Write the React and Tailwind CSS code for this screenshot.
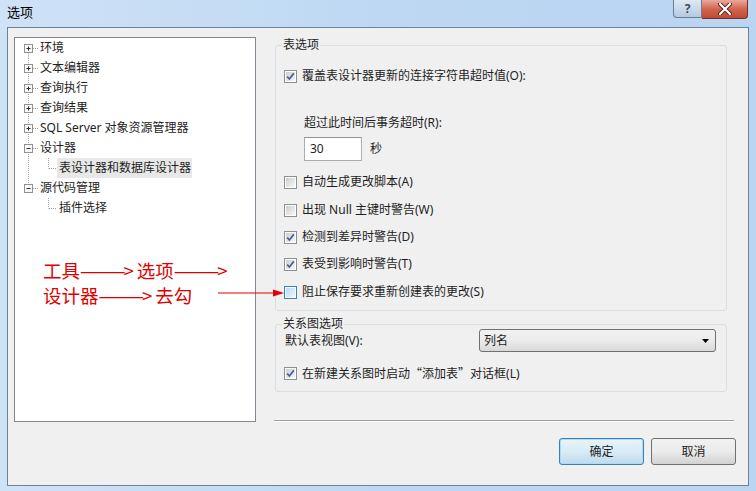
import React from 'react';

const tree = [
  { label: '环境', kind: 'plus', first: true },
  { label: '文本编辑器', kind: 'plus' },
  { label: '查询执行', kind: 'plus' },
  { label: '查询结果', kind: 'plus' },
  { label: 'SQL Server 对象资源管理器', kind: 'plus' },
  { label: '设计器', kind: 'minus' },
  { label: '表设计器和数据库设计器', kind: 'child', trunk: true, selected: true },
  { label: '源代码管理', kind: 'minus', last: true },
  { label: '插件选择', kind: 'child', trunk: false },
];

// dotted connectors + expander box of one tree row
function TreeGlyph({ item }) {
  const dot = { stroke: '#a0a0a0', strokeWidth: 1, strokeDasharray: '1 1' };
  if (item.kind === 'child') {
    return (
      <svg width="42" height="20" className="shrink-0">
        {item.trunk && <line x1="13.5" y1="0" x2="13.5" y2="20" {...dot} />}
        <line x1="33.5" y1="0" x2="33.5" y2="10.5" {...dot} />
        <line x1="34" y1="10.5" x2="42" y2="10.5" {...dot} />
      </svg>
    );
  }
  return (
    <svg width="25" height="20" className="shrink-0">
      <line x1="13.5" y1={item.first ? 10.5 : 0} x2="13.5" y2={item.last ? 10.5 : 20} {...dot} />
      <line x1="18" y1="10.5" x2="24" y2="10.5" {...dot} />
      <rect x="9.5" y="6.5" width="8" height="8" fill="#fafafa" stroke="#919191" />
      <line x1="11.5" y1="10.5" x2="15.5" y2="10.5" stroke="#2b2b2b" />
      {item.kind === 'plus' && <line x1="13.5" y1="8.5" x2="13.5" y2="12.5" stroke="#2b2b2b" />}
    </svg>
  );
}

function Check({ checked, hot }) {
  return (
    <span
      className={`flex h-[13px] w-[13px] shrink-0 items-center justify-center border bg-white ${
        hot ? 'border-[#3c7fb1]' : 'border-[#8e8f8f]'
      }`}
    >
      <span
        className={`flex h-[9px] w-[9px] items-center justify-center ${
          hot ? 'bg-gradient-to-br from-[#b9dcf3] to-[#e9f6fd]' : 'bg-gradient-to-br from-[#cfcfcf] to-[#f7f7f7]'
        }`}
      >
        {checked && (
          <svg width="9" height="9" viewBox="0 0 9 9">
            <path d="M1.2 4.6 L3.4 7 L7.8 1.4" fill="none" stroke="#4a5e9b" strokeWidth="1.7" />
          </svg>
        )}
      </span>
    </span>
  );
}

function CheckRow({ checked, hot, children, className = '' }) {
  return (
    <div className={`flex h-[16px] items-center gap-[5px] ${className}`}>
      <Check checked={checked} hot={hot} />
      <span>{children}</span>
    </div>
  );
}

export default function App() {
  return (
    <div className="flex h-[491px] w-[756px] flex-col overflow-hidden bg-gradient-to-r from-[#cfe2f6] via-[#bed8f3] to-[#b9d5f2] font-['Noto_Sans','Noto_Sans_CJK_SC',sans-serif] text-[12px] text-[#1e1e1e]">
      {/* Title bar */}
      <div className="flex h-[27px] shrink-0 items-start">
        <div className="pl-[7px] pt-[3px] text-[13px] leading-[18px] text-black">选项</div>
        <div className="ml-auto mr-[8px] flex">
          <div className="flex h-[18px] w-[29px] items-center justify-center rounded-bl-[4px] border border-t-0 border-[#6b7d95] bg-gradient-to-b from-[#dfe9f5] to-[#b6c9df] text-[12px] font-bold leading-none text-[#3b4a5e]">
            ?
          </div>
          <div className="flex h-[19px] w-[46px] items-center justify-center rounded-br-[4px] border border-l-0 border-t-0 border-[#7a2d22] bg-gradient-to-b from-[#e9a99c] via-[#d0654f] to-[#c14a33]">
            <svg width="14" height="12" viewBox="0 0 14 12">
              <path d="M2 1 L12 11 M12 1 L2 11" stroke="#5a1d14" strokeWidth="4" strokeLinecap="round" />
              <path d="M2 1 L12 11 M12 1 L2 11" stroke="#ffffff" strokeWidth="2.2" strokeLinecap="round" />
            </svg>
          </div>
        </div>
      </div>

      {/* Client area */}
      <div className="relative mx-[7px] mb-[5px] flex flex-1 border border-[#6d8199] bg-[#f0f0f0]">
        {/* Tree */}
        <div className="ml-[6px] mt-[9px] h-[385px] w-[242px] shrink-0 border border-[#828790] bg-white">
          {tree.map((item) => (
            <div key={item.label} className="flex h-[20px] items-center">
              <TreeGlyph item={item} />
              <span
                className={`flex h-[20px] items-center leading-none ${
                  item.kind === 'child' ? 'pl-[2px] pr-[1px]' : ''
                } ${item.selected ? 'bg-[#e8e8e8]' : ''}`}
              >
                {item.label}
              </span>
            </div>
          ))}
        </div>

        {/* Options */}
        <div className="ml-[18px] flex w-[462px] flex-col">
          <fieldset className="ml-[1px] mt-[11px] w-[452px] rounded-[3px] border border-[#d5dfe5] px-0 pb-[10px]">
            <legend className="ml-[6px] px-[1px] leading-[12px]">表选项</legend>
            <div className="flex flex-col pl-[8px]">
              <CheckRow checked className="mt-[17px]">覆盖表设计器更新的连接字符串超时值(O):</CheckRow>
              <div className="ml-[20px] mt-[31px] h-[16px] leading-[16px]">超过此时间后事务超时(R):</div>
              <div className="ml-[20px] mt-[6px] flex items-center">
                <div className="flex h-[24px] w-[58px] items-center border border-[#abadb3] border-t-[#8f959f] bg-white pl-[5px]">
                  30
                </div>
                <span className="ml-[8px]">秒</span>
              </div>
              <CheckRow className="mt-[13px]">自动生成更改脚本(A)</CheckRow>
              <CheckRow className="mt-[12px]">出现 Null 主键时警告(W)</CheckRow>
              <CheckRow checked className="mt-[11px]">检测到差异时警告(D)</CheckRow>
              <CheckRow checked className="mt-[11px]">表受到影响时警告(T)</CheckRow>
              <CheckRow hot className="mt-[12px]">阻止保存要求重新创建表的更改(S)</CheckRow>
            </div>
          </fieldset>

          <fieldset className="ml-[1px] mt-[7px] w-[452px] rounded-[3px] border border-[#d5dfe5] px-0 pb-[10px]">
            <legend className="ml-[6px] px-[1px] leading-[12px]">关系图选项</legend>
            <div className="flex flex-col pl-[9px]">
              <div className="-mt-[1px] flex items-center">
                <span className="w-[194px]">默认表视图(V):</span>
                <div className="flex h-[23px] w-[237px] items-center justify-between rounded-[3px] border border-[#707070] bg-gradient-to-b from-[#f2f2f2] via-[#ebebeb] to-[#d9d9d9] pl-[4px] pr-[6px]">
                  <span>列名</span>
                  <svg width="7" height="4" viewBox="0 0 7 4">
                    <path d="M0 0 H7 L3.5 4 Z" fill="#000" />
                  </svg>
                </div>
              </div>
              <CheckRow checked className="-ml-[1px] mt-[13px]">
                在新建关系图时启动<span className="font-['Noto_Sans_CJK_SC',sans-serif]">“添加表”</span>对话框(L)
              </CheckRow>
            </div>
          </fieldset>

          <div className="mt-[28px] h-[2px] w-[460px] border-b border-t border-b-white border-t-[#a0a0a0]" />

          <div className="mt-[16px] flex justify-end gap-[7px]">
            <button className="flex h-[27px] w-[85px] items-center justify-center rounded-[3px] border border-[#3c7fb1] bg-gradient-to-b from-[#e8f3fa] via-[#d9ebf5] to-[#bcdcee] shadow-[inset_0_0_0_1px_#a9dcf5]">
              确定
            </button>
            <button className="flex h-[27px] w-[85px] items-center justify-center rounded-[3px] border border-[#707070] bg-gradient-to-b from-[#f2f2f2] via-[#ebebeb] to-[#d2d2d2]">
              取消
            </button>
          </div>
        </div>

        {/* Red annotation drawn over the dialog */}
        <div className="absolute left-[35px] top-[230px] font-['Noto_Sans_CJK_SC',sans-serif] text-[18.5px] leading-[25px] text-[#e00000]">
          <div>
            工具<span className="tracking-[-2px]">———</span>&gt;<span className="ml-[3px]">选项</span>
            <span className="tracking-[-2px]">———</span>&gt;
          </div>
          <div>
            设计器<span className="tracking-[-2px]">———</span>&gt;<span className="ml-[3px]">去勾</span>
          </div>
        </div>
        <svg className="absolute left-[210px] top-[260px]" width="66" height="10" viewBox="0 0 66 10">
          <line x1="0" y1="5" x2="56" y2="5" stroke="#e00000" strokeWidth="1" />
          <path d="M55 1.5 L66 5 L55 8.5 Z" fill="#e00000" />
        </svg>
      </div>
    </div>
  );
}
